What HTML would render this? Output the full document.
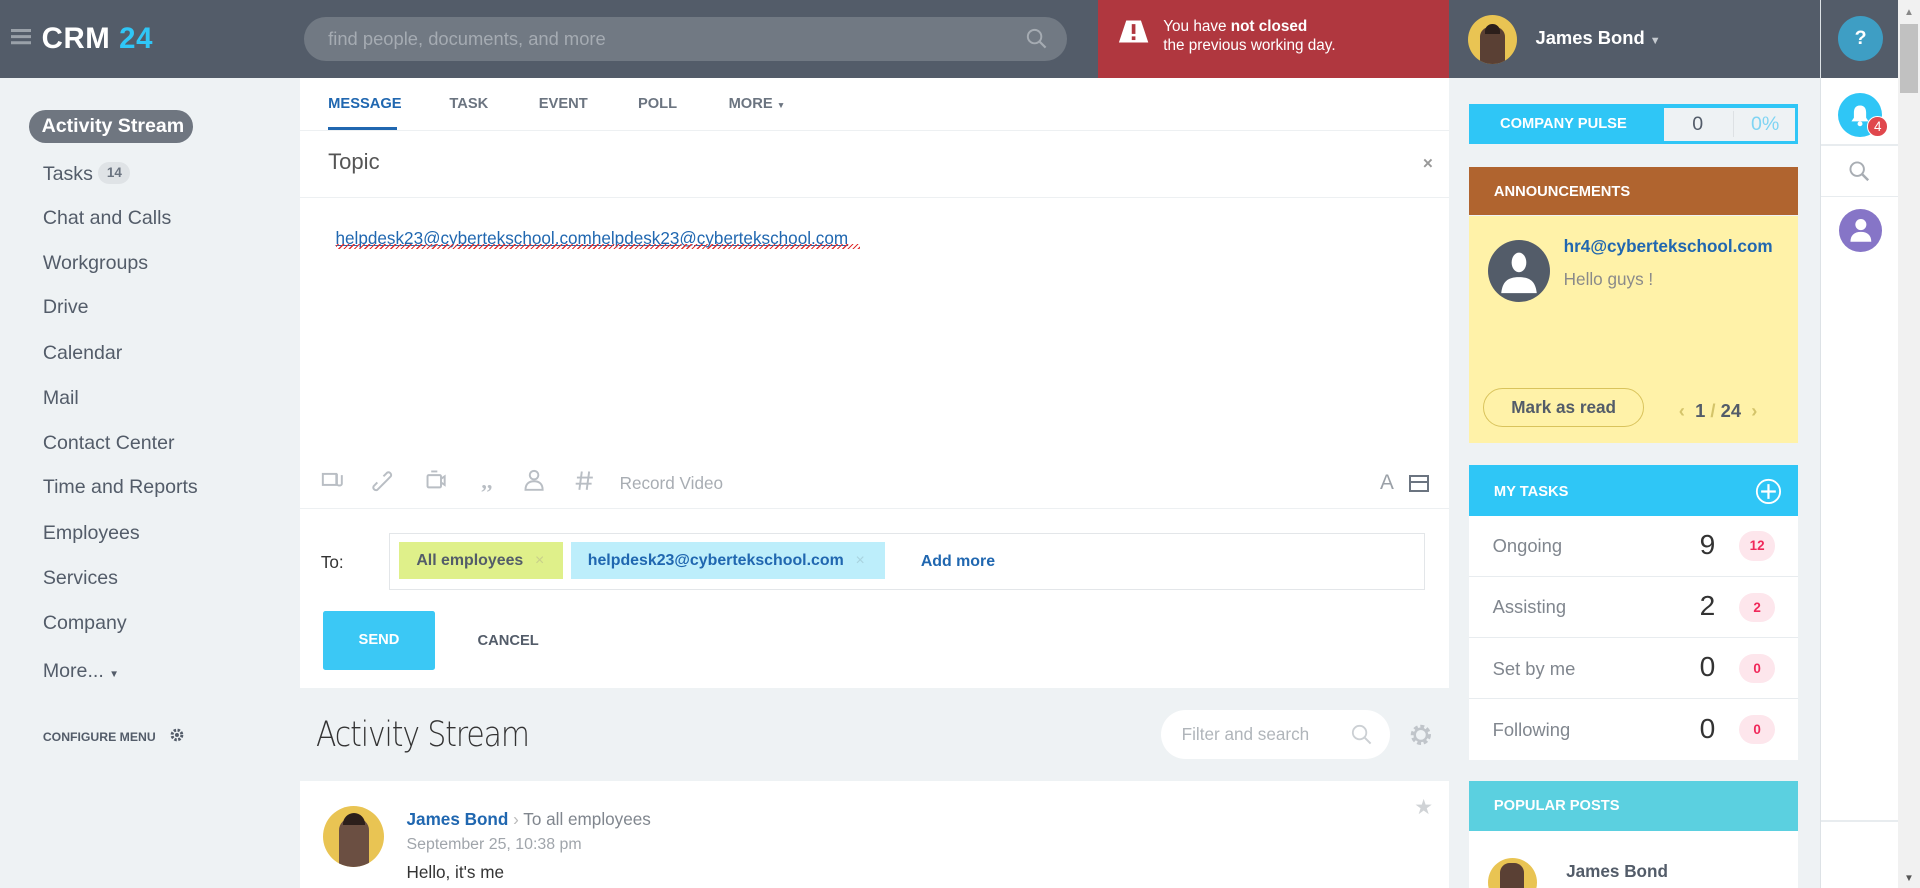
<!DOCTYPE html>
<html><head><meta charset="utf-8"><style>
*{margin:0;padding:0;box-sizing:border-box}
html,body{width:1920px;height:888px;overflow:hidden;background:#eef2f4}
#w{zoom:1.22449;width:1568px;height:725px;position:relative;font-family:"Liberation Sans",Arial,sans-serif;background:#eef2f4;overflow:hidden}
.a{position:absolute}
.hdr{left:0;top:0;width:1550px;height:64px;background:#535c69}
.menu div{position:absolute;left:35px;font-size:16px;color:#535c69}
.tab{position:absolute;top:78px;font-size:12px;font-weight:bold;color:#6b7480}
.row{position:absolute;left:1200px;width:268px;height:50px;background:#fff;border-bottom:1px solid #e8ecef}
.row .l{position:absolute;left:19px;top:16px;font-size:15px;color:#80868e}
.row .n{position:absolute;left:188px;top:11px;font-size:23px;color:#333;font-weight:300}
.row .b{position:absolute;left:220px;top:13px;width:30px;height:24px;border-radius:12px;background:#fde6ec;color:#f0285a;font-size:11px;font-weight:bold;text-align:center;line-height:24px}
.ic{stroke:#b9bec4;fill:none;stroke-width:1.6}
</style></head><body><div id="w">
<div class="a hdr"></div>
<div class="a" style="left:9px;top:24px;width:16px;height:2px;background:#9aa1a9;box-shadow:0 5px 0 #9aa1a9,0 10px 0 #9aa1a9"></div>
<div class="a" style="left:34px;top:18px;font-size:24px;color:#fff;font-weight:bold;letter-spacing:0.5px">CRM <span style="color:#2fc6f6">24</span></div>
<div class="a" style="left:248px;top:14px;width:623px;height:36px;border-radius:18px;background:#717983"></div>
<div class="a" style="left:268px;top:23px;font-size:15px;color:#a5abb2">find people, documents, and more</div>
<svg class="a" style="left:838px;top:23px" width="18" height="18"><circle cx="7" cy="7" r="5.5" stroke="#a5abb2" stroke-width="1.6" fill="none"/><path d="M11 11l5 5" stroke="#a5abb2" stroke-width="1.8"/></svg>
<div class="a" style="left:897px;top:0;width:286px;height:64px;background:#b0373f"></div>
<svg class="a" style="left:910px;top:15px" width="32" height="22"><path d="M4 20L10 2h12l6 18z" fill="#fff"/><rect x="14.5" y="5" width="3" height="8" fill="#b0373f"/><rect x="14.5" y="15" width="3" height="3" fill="#b0373f"/></svg>
<div class="a" style="left:950px;top:15px;font-size:12.5px;color:#fff;line-height:15px">You have <b>not closed</b><br>the previous working day.</div>
<div class="a" style="left:1199px;top:12px;width:40px;height:40px;border-radius:50%;background:#e9c453;overflow:hidden"><div style="position:absolute;left:10px;top:10px;width:20px;height:34px;background:#5a4034;border-radius:8px 8px 0 0"></div><div style="position:absolute;left:14px;top:8px;width:12px;height:8px;background:#2c1f1b;border-radius:6px 6px 0 0"></div></div>
<div class="a" style="left:1254px;top:22px;font-size:15px;font-weight:bold;color:#fff">James Bond <span style="font-size:9px;color:#c5cad0">▼</span></div>
<div class="a" style="left:1486px;top:0;width:1px;height:725px;background:#dde2e6"></div>
<div class="a" style="left:1487px;top:64px;width:63px;height:661px;background:#fff"></div>
<div class="a" style="left:1501px;top:13px;width:37px;height:37px;border-radius:50%;background:#3e9ec4;color:#fff;font-weight:bold;font-size:16px;text-align:center;line-height:37px">?</div>
<div class="a" style="left:1501px;top:76px;width:36px;height:36px;border-radius:50%;background:#2fc6f6"></div>
<svg class="a" style="left:1510px;top:84px" width="18" height="20"><path d="M9 2c-4 0-5 3-5 6v4l-2 3h14l-2-3V8c0-3-1-6-5-6z" fill="#fff"/><circle cx="9" cy="17" r="2" fill="#fff"/></svg>
<div class="a" style="left:1525px;top:95px;width:17px;height:17px;border-radius:50%;background:#e0474d;color:#fff;font-size:11px;text-align:center;line-height:17px;border:1px solid #fff">4</div>
<div class="a" style="left:1487px;top:118px;width:63px;height:1px;background:#e8ecef"></div>
<svg class="a" style="left:1509px;top:131px" width="20" height="20"><circle cx="7.5" cy="7.5" r="5.5" stroke="#a8adb3" stroke-width="1.6" fill="none"/><path d="M11.5 11.5l5 5" stroke="#a8adb3" stroke-width="2"/></svg>
<div class="a" style="left:1487px;top:160px;width:63px;height:1px;background:#e8ecef"></div>
<div class="a" style="left:1502px;top:171px;width:35px;height:35px;border-radius:50%;background:#8675c7"></div>
<svg class="a" style="left:1509px;top:176px" width="21" height="24"><circle cx="10.5" cy="7" r="4.5" fill="#fff"/><path d="M2 21c0-5 3-8 8.5-8s8.5 3 8.5 8z" fill="#fff"/></svg>
<div class="a" style="left:1487px;top:670px;width:63px;height:1px;background:#e8ecef"></div>
<div class="a" style="left:1550px;top:0;width:18px;height:725px;background:#f1f1f1"></div>
<div class="a" style="left:1552px;top:20px;width:14px;height:56px;background:#c1c1c1"></div>
<div class="a" style="left:1555px;top:6px;font-size:8px;color:#888">▲</div>
<div class="a" style="left:1555px;top:713px;font-size:8px;color:#555">▼</div>

<div class="a" style="left:24px;top:90px;width:134px;height:27px;border-radius:14px;background:#6f7680"></div>
<div class="a" style="left:34px;top:94px;font-size:16px;font-weight:bold;color:#fff">Activity Stream</div>
<div class="menu">
<div style="top:132px">Tasks <span style="display:inline-block;background:#dfe3e6;border-radius:10px;font-size:11px;font-weight:bold;color:#6b7480;padding:3px 7px;vertical-align:2px">14</span></div>
<div style="top:169px">Chat and Calls</div>
<div style="top:206px">Workgroups</div>
<div style="top:242px">Drive</div>
<div style="top:279px">Calendar</div>
<div style="top:316px">Mail</div>
<div style="top:353px">Contact Center</div>
<div style="top:389px">Time and Reports</div>
<div style="top:426px">Employees</div>
<div style="top:463px">Services</div>
<div style="top:500px">Company</div>
<div style="top:539px">More... <span style="font-size:8px">▼</span></div>
</div>
<div class="a" style="left:35px;top:596px;font-size:10px;font-weight:bold;color:#535c69">CONFIGURE MENU</div>
<svg class="a" style="left:138px;top:594px" width="13" height="13"><circle cx="6.5" cy="6.5" r="4" stroke="#535c69" stroke-width="2.4" fill="none" stroke-dasharray="2 1.2"/><circle cx="6.5" cy="6.5" r="1.6" fill="#535c69"/></svg>

<div class="a" style="left:245px;top:64px;width:938px;height:498px;background:#fff"></div>
<div class="tab" style="left:268px;color:#2067b0">MESSAGE</div>
<div class="tab" style="left:367px">TASK</div>
<div class="tab" style="left:440px">EVENT</div>
<div class="tab" style="left:521px">POLL</div>
<div class="tab" style="left:595px">MORE <span style="font-size:7px">▼</span></div>
<div class="a" style="left:245px;top:106px;width:938px;height:1px;background:#edf0f2"></div>
<div class="a" style="left:268px;top:104px;width:56px;height:2px;background:#2067b0"></div>
<div class="a" style="left:268px;top:122px;font-size:18px;color:#555">Topic</div>
<div class="a" style="left:1162px;top:125px;font-size:14px;color:#999;font-weight:bold">×</div>
<div class="a" style="left:245px;top:161px;width:938px;height:1px;background:#edf0f2"></div>
<div class="a" style="left:274px;top:186px;font-size:14px;color:#2067b0;text-decoration:underline;text-decoration-color:#2067b0">helpdesk23@cybertekschool.comhelpdesk23@cybertekschool.com</div>
<div class="a" style="left:274px;top:199px;width:428px;height:4px;background:repeating-linear-gradient(135deg,transparent 0 1px,#e03030 1px 2px,transparent 2px 3px)"></div>
<svg class="a" style="left:262px;top:383px" width="240" height="20">
<rect class="ic" x="1.5" y="4" width="11" height="9"/><path class="ic" d="M13 4v8c0 2 4 2 4 0V5"/>
<path class="ic" d="M49 14l5-5m-3-3l3-3c2-1 4 1 3 3l-3 3m-5 5l-3 3c-2 1-4-1-3-3l3-3"/>
<rect class="ic" x="87" y="5" width="11" height="10" rx="1"/><path class="ic" d="M98 8l3-2v7l-3-2M90 2h5"/>
<text x="131" y="16" font-size="18" fill="#b9bec4" font-weight="bold" font-family="Liberation Serif">,,</text>
<circle class="ic" cx="174" cy="5" r="3.5"/><path class="ic" d="M167 17c0-5 3-7 7-7s7 2 7 7z"/>
<path class="ic" d="M213 2l-2 15M219 2l-2 15M209 7h13M208 12h13"/></svg>
<div class="a" style="left:506px;top:386px;font-size:14px;color:#a8adb3">Record Video</div>
<div class="a" style="left:1127px;top:385px;font-size:17px;color:#9aa0a7">A</div>
<div class="a" style="left:1151px;top:388px;width:16px;height:14px;border:2px solid #6b7480"><div style="height:2px;background:#6b7480;margin-top:3px"></div></div>
<div class="a" style="left:245px;top:415px;width:938px;height:1px;background:#edf0f2"></div>
<div class="a" style="left:262px;top:451px;font-size:14px;color:#333">To:</div>
<div class="a" style="left:318px;top:435px;width:846px;height:47px;border:1px solid #e3e6e9"></div>
<div class="a" style="left:326px;top:443px;width:134px;height:30px;background:#dff08a"></div>
<div class="a" style="left:340px;top:451px;font-size:13px;font-weight:bold;color:#535c69">All employees <span style="color:#c9d08a;font-weight:normal;margin-left:6px">×</span></div>
<div class="a" style="left:466px;top:443px;width:257px;height:30px;background:#bdeefb"></div>
<div class="a" style="left:480px;top:451px;font-size:13px;font-weight:bold;color:#2067b0">helpdesk23@cybertekschool.com <span style="color:#a9d3df;font-weight:normal;margin-left:6px">×</span></div>
<div class="a" style="left:752px;top:452px;font-size:13px;font-weight:bold;color:#2067b0">Add more</div>
<div class="a" style="left:264px;top:499px;width:91px;height:48px;background:#3bc8f5;border-radius:2px;color:#fff;font-size:12px;font-weight:bold;text-align:center;line-height:48px">SEND</div>
<div class="a" style="left:390px;top:517px;font-size:12px;font-weight:bold;color:#535c69">CANCEL</div>

<div class="a" style="left:258px;top:584px;font-size:28px;color:#333;font-weight:300;font-family:'DejaVu Sans','Liberation Sans',sans-serif;letter-spacing:-1px;transform:scaleX(0.87);transform-origin:left">Activity Stream</div>
<div class="a" style="left:948px;top:580px;width:187px;height:40px;border-radius:20px;background:#fff"></div>
<div class="a" style="left:965px;top:591px;font-size:14px;color:#b0b5ba">Filter and search</div>
<svg class="a" style="left:1103px;top:591px" width="18" height="18"><circle cx="7" cy="7" r="5.5" stroke="#ccd0d4" stroke-width="1.5" fill="none"/><path d="M11 11l5 5" stroke="#ccd0d4" stroke-width="1.6"/></svg>
<svg class="a" style="left:1150px;top:590px" width="21" height="21"><circle cx="10.5" cy="10.5" r="6.5" stroke="#c0c5ca" stroke-width="3.5" fill="none" stroke-dasharray="3 2"/><circle cx="10.5" cy="10.5" r="5" stroke="#c0c5ca" stroke-width="2" fill="none"/></svg>
<div class="a" style="left:245px;top:638px;width:938px;height:87px;background:#fff"></div>
<div class="a" style="left:264px;top:658px;width:50px;height:50px;border-radius:50%;background:#e9c453;overflow:hidden"><div style="position:absolute;left:13px;top:10px;width:24px;height:44px;background:#6b4f42;border-radius:10px 10px 0 0"></div><div style="position:absolute;left:16px;top:6px;width:18px;height:10px;background:#2c1f1b;border-radius:9px 9px 0 0"></div></div>
<div class="a" style="left:332px;top:661px;font-size:14px;color:#535c69"><b style="color:#2067b0">James Bond</b> <span style="color:#bbb">›</span> <span style="color:#80868e">To all employees</span></div>
<div class="a" style="left:332px;top:683px;font-size:13px;color:#a0a5ab">September 25, 10:38 pm</div>
<div class="a" style="left:332px;top:704px;font-size:14px;color:#333">Hello, it's me</div>
<div class="a" style="left:1155px;top:649px;font-size:17px;color:#d0d3d6">★</div>

<div class="a" style="left:1200px;top:85px;width:268px;height:33px;background:#2fc6f6"></div>
<div class="a" style="left:1225px;top:95px;font-size:12px;font-weight:bold;color:#fff">COMPANY PULSE</div>
<div class="a" style="left:1359px;top:88px;width:107px;height:27px;background:#eef2f4"></div>
<div class="a" style="left:1415px;top:91px;width:1px;height:21px;background:#dde1e4"></div>
<div class="a" style="left:1382px;top:92px;font-size:16px;color:#535c69">0</div>
<div class="a" style="left:1430px;top:92px;font-size:16px;color:#7fd4f3">0%</div>
<div class="a" style="left:1200px;top:136px;width:268px;height:40px;background:#b0642f"></div>
<div class="a" style="left:1220px;top:150px;font-size:12px;font-weight:bold;color:#fff">ANNOUNCEMENTS</div>
<div class="a" style="left:1200px;top:176px;width:268px;height:186px;background:#fff2a8"></div>
<div class="a" style="left:1215px;top:196px;width:51px;height:51px;border-radius:50%;background:#535c69"></div>
<svg class="a" style="left:1225px;top:203px" width="31" height="38"><ellipse cx="15.5" cy="11" rx="6" ry="8" fill="#fff"/><path d="M1 36c1-9 5-13 14.5-13S29 27 30 36z" fill="#fff"/></svg>
<div class="a" style="left:1277px;top:193px;font-size:14px;font-weight:bold;color:#2067b0">hr4@cybertekschool.com</div>
<div class="a" style="left:1277px;top:220px;font-size:14px;color:#8a8a8a">Hello guys !</div>
<div class="a" style="left:1211px;top:317px;width:132px;height:32px;border:1px solid #d9c35c;border-radius:16px;font-size:14px;font-weight:bold;color:#535c69;text-align:center;line-height:30px">Mark as read</div>
<div class="a" style="left:1371px;top:327px;font-size:15px;font-weight:bold;color:#535c69"><span style="color:#d4c46a">‹</span>&nbsp; 1 <span style="color:#d4c46a">/</span> 24 &nbsp;<span style="color:#d4c46a">›</span></div>
<div class="a" style="left:1200px;top:380px;width:268px;height:41px;background:#2fc6f6"></div>
<div class="a" style="left:1220px;top:395px;font-size:12px;font-weight:bold;color:#fff">MY TASKS</div>
<svg class="a" style="left:1433px;top:390px" width="22" height="22"><circle cx="11" cy="11" r="9.5" stroke="#fff" stroke-width="1.5" fill="none"/><path d="M11 5v12M5 11h12" stroke="#fff" stroke-width="1.8"/></svg>
<div class="row" style="top:421px"><div class="l">Ongoing</div><div class="n">9</div><div class="b">12</div></div>
<div class="row" style="top:471px"><div class="l">Assisting</div><div class="n">2</div><div class="b">2</div></div>
<div class="row" style="top:521px"><div class="l">Set by me</div><div class="n">0</div><div class="b">0</div></div>
<div class="row" style="top:571px;border:0"><div class="l">Following</div><div class="n">0</div><div class="b">0</div></div>
<div class="a" style="left:1200px;top:638px;width:268px;height:41px;background:#5bd0e0"></div>
<div class="a" style="left:1220px;top:652px;font-size:12px;font-weight:bold;color:#fff">POPULAR POSTS</div>
<div class="a" style="left:1200px;top:679px;width:268px;height:46px;background:#fff"></div>
<div class="a" style="left:1215px;top:701px;width:40px;height:40px;border-radius:50%;background:#e9c453;overflow:hidden"><div style="position:absolute;left:10px;top:4px;width:20px;height:36px;background:#5a4034;border-radius:8px 8px 0 0"></div></div>
<div class="a" style="left:1279px;top:703px;font-size:14px;font-weight:bold;color:#535c69">James Bond</div>
</div></body></html>
